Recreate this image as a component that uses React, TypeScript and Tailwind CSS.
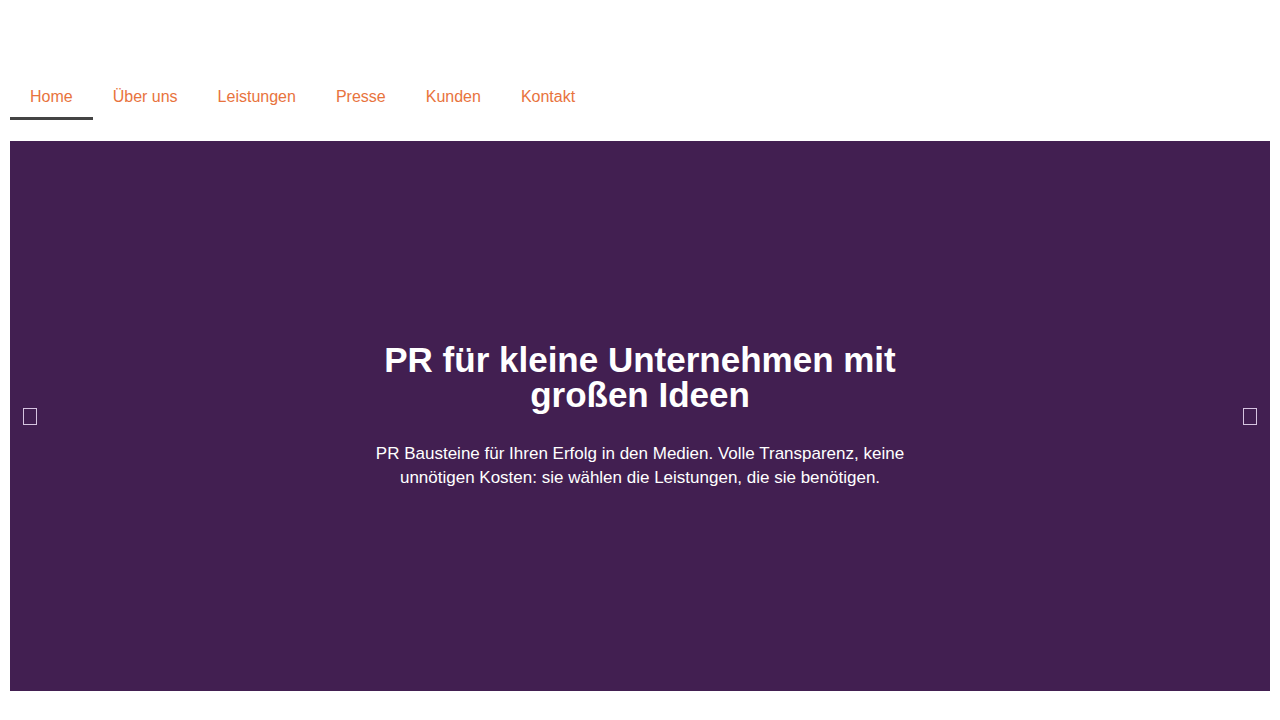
import React from 'react';

const navItems = ['Home', 'Über uns', 'Leistungen', 'Presse', 'Kunden', 'Kontakt'];

function GlyphBox() {
  // missing-glyph box used as slider arrow
  return <span className="block w-[14px] h-[17px] border border-[#d6c4e0]" />;
}

export default function App() {
  return (
    <div className="min-h-screen bg-white font-['Liberation_Sans',Arial,sans-serif]">
      {/* Navigation */}
      <nav className="px-[10px] pt-[85px] flex">
        {navItems.map((item, i) => (
          <a
            key={item}
            href="#"
            className={
              i === 0
                ? 'px-5 leading-[24px] pb-[8px] text-[16px] text-[#e8733d] border-b-[3px] border-[#444444]'
                : 'px-5 leading-[24px] pb-[8px] text-[16px] text-[#e8733d] border-b-[3px] border-transparent'
            }
          >
            {item}
          </a>
        ))}
      </nav>

      {/* Hero slider */}
      <section className="mx-[10px] mt-[21px] h-[550px] bg-[#421f51] flex items-center justify-between px-[13px]">
        <button className="p-0">
          <GlyphBox />
        </button>
        <div className="w-[540px] text-center text-white">
          <h1 className="text-[35px] leading-[35px] font-bold">
            PR für kleine Unternehmen mit großen Ideen
          </h1>
          <p className="mt-[30px] text-[17px] leading-[24px]">
            PR Bausteine für Ihren Erfolg in den Medien. Volle Transparenz, keine unnötigen Kosten: sie wählen die
            Leistungen, die sie benötigen.
          </p>
        </div>
        <button className="p-0">
          <GlyphBox />
        </button>
      </section>
    </div>
  );
}
